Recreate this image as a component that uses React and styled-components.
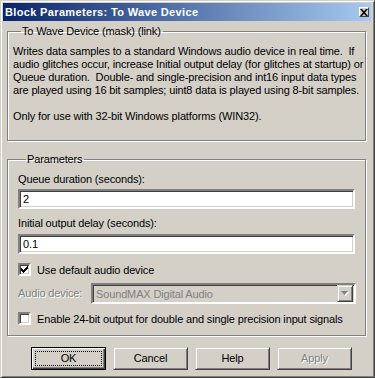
import React from "react";
import styled, { createGlobalStyle, css } from "styled-components";

const Global = createGlobalStyle`
  html, body { margin: 0; padding: 0; background: #D4D0C8; }
  body { font-family: "Liberation Sans", Arial, sans-serif; font-size: 11px; letter-spacing: -0.14px; color: #000; }
  * { box-sizing: border-box; }
`;

const FACE = "#D4D0C8";

const Window = styled.div`
  width: 375px;
  height: 378px;
  overflow: hidden;
  background: ${FACE};
  border: 1px solid;
  border-color: ${FACE} #404040 #404040 ${FACE};
  box-shadow: inset 1px 1px 0 #fff, inset -1px -1px 0 #808080;
  padding: 2px 3px 2px 2px;
  display: flex;
  flex-direction: column;
`;

const TitleBar = styled.div`
  height: 18px;
  flex: none;
  background: linear-gradient(to right, #0A246A, #A6CAF0);
  display: flex;
  align-items: center;
  justify-content: space-between;
  padding: 0 2px 0 2px;
`;

const Title = styled.div`
  color: #fff;
  font-weight: bold;
  font-size: 11px;
  line-height: 14px;
  letter-spacing: 0.35px;
`;

const CloseButton = styled.div`
  width: 10px;
  height: 10px;
  background: ${FACE};
  border: 1px solid;
  border-color: #fff #404040 #404040 #fff;
  display: flex;
  align-items: center;
  justify-content: center;
`;

const Body = styled.div`
  flex: 1;
  display: flex;
  flex-direction: column;
  padding: 4px 5px 0 4px;
`;

const Group = styled.fieldset`
  margin: 0 0 ${(p) => p.$mb || 0}px 0;
  border: 1px solid #808080;
  box-shadow: inset 1px 1px 0 #fff, 1px 1px 0 #fff;
  padding: ${(p) => p.$pad};
  min-width: 0;
`;

const Legend = styled.legend`
  margin-left: 8px;
  padding: 0 2px 0 1px;
  line-height: 13px;
  font-size: 11px;
`;

const Description = styled.div`
  white-space: pre;
  line-height: 13px;
`;

const Label = styled.div`
  line-height: 13px;
  margin-top: ${(p) => p.$mt || 0}px;
  ${(p) =>
    p.$disabled &&
    css`
      color: #808080;
      text-shadow: 1px 1px 0 #fff;
    `}
`;

const sunken = css`
  border: 2px solid;
  border-color: #808080 #fff #fff #808080;
  box-shadow: inset 1px 1px 0 #404040, inset -1px -1px 0 ${FACE};
`;

const TextInput = styled.div`
  ${sunken};
  height: 20px;
  margin-top: ${(p) => p.$mt || 0}px;
  background: #fff;
  padding: 0 3px;
  line-height: 16px;
  width: 337px;
`;

const CheckRow = styled.label`
  display: flex;
  align-items: center;
  gap: 6px;
  height: 13px;
  margin-top: ${(p) => p.$mt || 0}px;
`;

const CheckBox = styled.span`
  ${sunken};
  width: 13px;
  height: 13px;
  background: #fff;
  display: flex;
  align-items: center;
  justify-content: center;
  flex: none;
`;

const DeviceRow = styled.div`
  display: flex;
  align-items: center;
  justify-content: space-between;
  margin-top: ${(p) => p.$mt || 0}px;
  width: 338px;
`;

const Combo = styled.div`
  ${sunken};
  width: 265px;
  height: 21px;
  background: ${FACE};
  display: flex;
  align-items: center;
  justify-content: space-between;
  padding: 0 1px 0 3px;
  color: #808080;
`;

const DropButton = styled.span`
  width: 16px;
  height: 17px;
  background: ${FACE};
  border: 1px solid;
  border-color: ${FACE} #404040 #404040 ${FACE};
  box-shadow: inset 1px 1px 0 #fff, inset -1px -1px 0 #808080;
  display: flex;
  align-items: center;
  justify-content: center;
`;

const ButtonRow = styled.div`
  display: flex;
  gap: 7px;
  padding-left: 24px;
  margin-top: 11px;
`;

const Button = styled.div`
  width: 75px;
  height: 23px;
  flex: none;
  border: 1px solid;
  border-color: ${FACE} #404040 #404040 ${FACE};
  box-shadow: inset 1px 1px 0 #fff, inset -1px -1px 0 #808080;
  display: flex;
  align-items: center;
  justify-content: center;
  line-height: 13px;
  ${(p) =>
    p.$default &&
    css`
      border: 1px solid #000;
      box-shadow: inset 1px 1px 0 #fff, inset -1px -1px 0 #404040, inset -2px -2px 0 #808080;
    `}
  ${(p) =>
    p.$disabled &&
    css`
      color: #808080;
      text-shadow: 1px 1px 0 #fff;
    `}
`;

const Focus = styled.span`
  width: 67px;
  height: 15px;
  border: 1px dotted #000;
  display: flex;
  align-items: center;
  justify-content: center;
`;

const Check = () => (
  <svg width="7" height="7" viewBox="0 0 7 7">
    <path d="M0 2h1v1h1v1h1v-1h1v-1h1v-1h1v-1h1v3h-1v1h-1v1h-1v1h-1v1h-1v-1h-1v-1h-1z" fill="#000" />
  </svg>
);

const Arrow = () => (
  <svg width="8" height="5" viewBox="0 0 8 5">
    <path d="M1 1h7l-3.5 4z" fill="#fff" />
    <path d="M0 0h7l-3.5 4z" fill="#808080" />
  </svg>
);

const CloseX = () => (
  <svg width="8" height="7" viewBox="0 0 8 7">
    <path d="M0 0h2l2 2.3 2-2.3h2l-3 3.5 3 3.5h-2l-2-2.3-2 2.3h-2l3-3.5z" fill="#000" />
  </svg>
);

const description =
  "Writes data samples to a standard Windows audio device in real time.  If\n" +
  "audio glitches occur, increase Initial output delay (for glitches at startup) or\n" +
  "Queue duration.  Double- and single-precision and int16 input data types\n" +
  "are played using 16 bit samples; uint8 data is played using 8-bit samples.\n" +
  "\n" +
  "Only for use with 32-bit Windows platforms (WIN32).";

export default function App() {
  return (
    <>
      <Global />
      <Window>
        <TitleBar>
          <Title>Block Parameters: To Wave Device</Title>
          <CloseButton>
            <CloseX />
          </CloseButton>
        </TitleBar>
        <Body>
          <Group $pad="7px 5px 17px 5px" $mb={12}>
            <Legend>To Wave Device (mask) (link)</Legend>
            <Description>{description}</Description>
          </Group>
          <Group $pad="7px 10px 10px 10px">
            <Legend>Parameters</Legend>
            <Label>Queue duration (seconds):</Label>
            <TextInput $mt={3}>2</TextInput>
            <Label $mt={8}>Initial output delay (seconds):</Label>
            <TextInput $mt={4}>0.1</TextInput>
            <CheckRow $mt={9}>
              <CheckBox>
                <Check />
              </CheckBox>
              Use default audio device
            </CheckRow>
            <DeviceRow $mt={7}>
              <Label $disabled>Audio device:</Label>
              <Combo>
                SoundMAX Digital Audio
                <DropButton>
                  <Arrow />
                </DropButton>
              </Combo>
            </DeviceRow>
            <CheckRow $mt={8}>
              <CheckBox />
              Enable 24-bit output for double and single precision input signals
            </CheckRow>
          </Group>
          <ButtonRow>
            <Button $default>
              <Focus>OK</Focus>
            </Button>
            <Button>Cancel</Button>
            <Button>Help</Button>
            <Button $disabled>Apply</Button>
          </ButtonRow>
        </Body>
      </Window>
    </>
  );
}
